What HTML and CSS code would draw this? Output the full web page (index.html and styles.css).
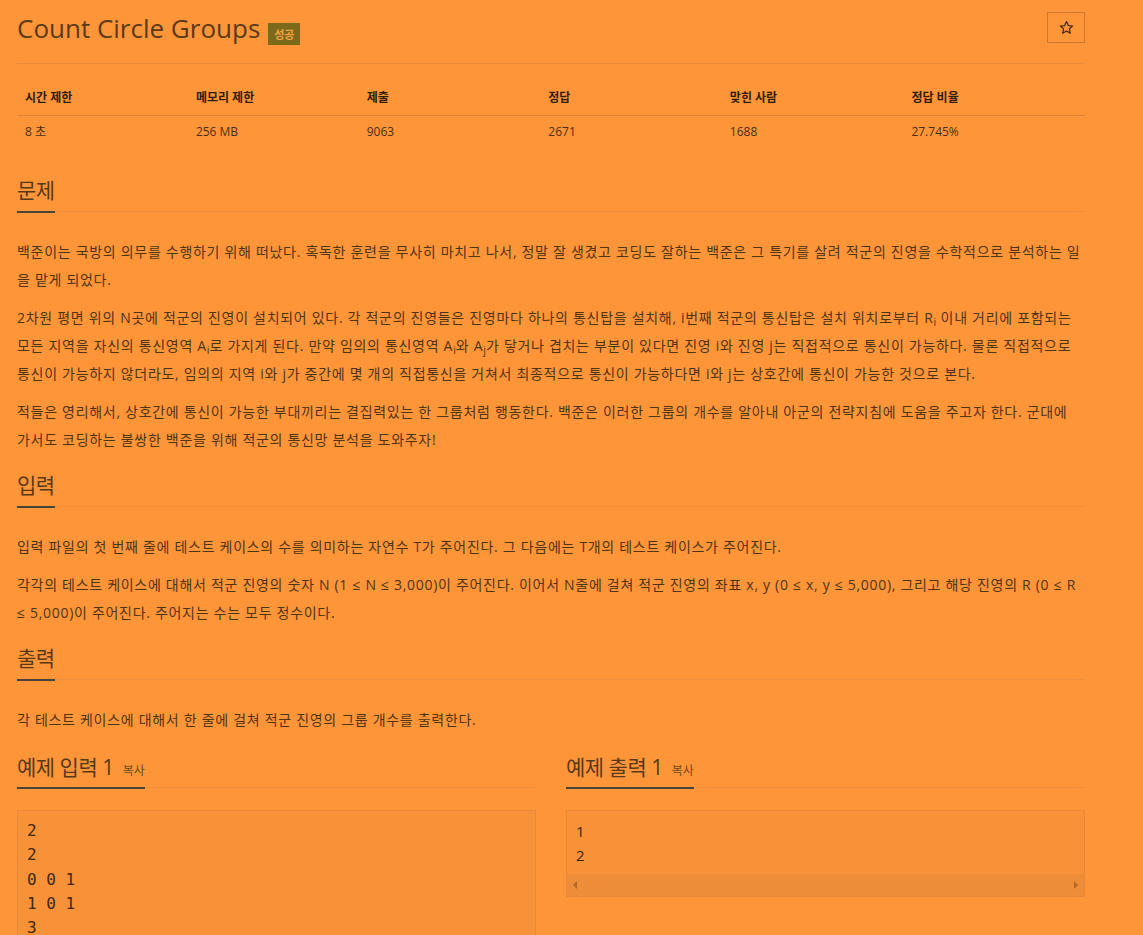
FILE: index.html
```html
<!DOCTYPE html>
<html lang="ko">
<head>
<meta charset="utf-8">
<title>Count Circle Groups</title>
<link rel="stylesheet" href="styles.css">
</head>
<body>
<div class="page">
  <div class="page-header">
    <h1 class="title"><span class="title-text">Count Circle Groups</span><span class="badge">성공</span></h1>
    <button class="star" type="button" aria-label="즐겨찾기">
      <svg width="15" height="15" viewBox="0 0 24 24"><path d="M12 2.5l2.85 6.4 6.95.7-5.2 4.65 1.5 6.85L12 17.55 5.9 21.1l1.5-6.85L2.2 9.6l6.95-.7z" fill="none" stroke="#3a2410" stroke-width="1.9" stroke-linejoin="round"/></svg>
    </button>
  </div>

  <table class="info">
    <thead>
      <tr><th class="c16">시간 제한</th><th class="c16">메모리 제한</th><th class="c17">제출</th><th class="c17">정답</th><th class="c17">맞힌 사람</th><th class="c17">정답 비율</th></tr>
    </thead>
    <tbody>
      <tr><td>8 초</td><td>256 MB</td><td>9063</td><td>2671</td><td>1688</td><td>27.745%</td></tr>
    </tbody>
  </table>

  <section class="sec">
    <div class="headline"><h2>문제</h2></div>
    <div class="text">
      <p>백준이는 국방의 의무를 수행하기 위해 떠났다. 혹독한 훈련을 무사히 마치고 나서, 정말 잘 생겼고 코딩도 잘하는 백준은 그 특기를 살려 적군의 진영을 수학적으로 분석하는 일을 맡게 되었다.</p>
      <p>2차원 평면 위의 N곳에 적군의 진영이 설치되어 있다. 각 적군의 진영들은 진영마다 하나의 통신탑을 설치해, i번째 적군의 통신탑은 설치 위치로부터 R<sub>i</sub> 이내 거리에 포함되는 모든 지역을 자신의 통신영역 A<sub>i</sub>로 가지게 된다. 만약 임의의 통신영역 A<sub>i</sub>와 A<sub>j</sub>가 닿거나 겹치는 부분이 있다면 진영 i와 진영 j는 직접적으로 통신이 가능하다. 물론 직접적으로 통신이 가능하지 않더라도, 임의의 지역 i와 j가 중간에 몇 개의 직접통신을 거쳐서 최종적으로 통신이 가능하다면 i와 j는 상호간에 통신이 가능한 것으로 본다.</p>
      <p>적들은 영리해서, 상호간에 통신이 가능한 부대끼리는 결집력있는 한 그룹처럼 행동한다. 백준은 이러한 그룹의 개수를 알아내 아군의 전략지침에 도움을 주고자 한다. 군대에 가서도 코딩하는 불쌍한 백준을 위해 적군의 통신망 분석을 도와주자!</p>
    </div>
  </section>

  <section class="sec">
    <div class="headline"><h2>입력</h2></div>
    <div class="text">
      <p>입력 파일의 첫 번째 줄에 테스트 케이스의 수를 의미하는 자연수 T가 주어진다. 그 다음에는 T개의 테스트 케이스가 주어진다.</p>
      <p>각각의 테스트 케이스에 대해서 적군 진영의 숫자 N (1 ≤ N ≤ 3,000)이 주어진다. 이어서 N줄에 걸쳐 적군 진영의 좌표 x, y (0 ≤ x, y ≤ 5,000), 그리고 해당 진영의 R (0 ≤ R ≤ 5,000)이 주어진다. 주어지는 수는 모두 정수이다.</p>
    </div>
  </section>

  <section class="sec">
    <div class="headline"><h2>출력</h2></div>
    <div class="text">
      <p>각 테스트 케이스에 대해서 한 줄에 걸쳐 적군 진영의 그룹 개수를 출력한다.</p>
    </div>
  </section>

  <div class="samples">
    <section class="sample">
      <div class="headline sample-head"><h2>예제 입력 1 <span class="copy">복사</span></h2></div>
      <pre class="sampledata">2
2
0 0 1
1 0 1
3
0 0 1
2 0 1
10 0 5</pre>
    </section>
    <section class="sample">
      <div class="headline sample-head"><h2>예제 출력 1 <span class="copy">복사</span></h2></div>
      <div class="outbox">
        <pre class="outdata">1
2</pre>
        <div class="hscroll">
          <span class="arrow arrow-left"></span>
          <span class="arrow arrow-right"></span>
        </div>
      </div>
    </section>
  </div>
</div>
</body>
</html>
```

FILE: styles.css
```css
html, body {
  margin: 0;
  padding: 0;
}

body {
  background: #ff9539;
  font-family: "Open Sans", "Noto Sans CJK KR", sans-serif;
  color: #4f3416;
}

.page {
  width: 1068px;
  margin-left: 17px;
  padding-bottom: 40px;
}

/* header */
.page-header {
  display: flex;
  justify-content: space-between;
  align-items: flex-start;
  padding-top: 12px;
  height: 51px;
  box-sizing: content-box;
  border-bottom: 1px solid #e98b3b;
}

.title {
  margin: 0;
  display: flex;
  align-items: flex-end;
  font-size: 26px;
  line-height: 32px;
  font-weight: 400;
  color: #5a3a17;
}

.badge {
  display: inline-block;
  margin-left: 8px;
  margin-bottom: -1px;
  width: 32px;
  height: 22px;
  line-height: 22px;
  text-align: center;
  background: #7b6a1c;
  color: #f6a23f;
  font-size: 11px;
  font-weight: 700;
  font-family: "Noto Sans CJK KR", sans-serif;
}

.star {
  width: 38px;
  height: 31px;
  margin: 0;
  padding: 0;
  border: 1px solid #c97832;
  background: transparent;
  display: flex;
  align-items: center;
  justify-content: center;
}

.star svg {
  display: block;
}

/* info table */
.info {
  width: 100%;
  border-collapse: collapse;
  margin-top: 17px;
  margin-bottom: 27px;
  font-size: 12px;
}

.info .c16 { width: 16%; }
.info .c17 { width: 17%; }

.info th {
  text-align: left;
  font-weight: 700;
  color: #2f1d0b;
  padding: 8px 8px;
  line-height: 18px;
  border-bottom: 1px solid #d98537;
}

.info td {
  padding: 7px 8px 8px;
  line-height: 18px;
  color: #4a2f13;
}

/* sections */
.headline {
  margin-top: 17px;
  margin-bottom: 26px;
  border-bottom: 1px dotted #df8a3d;
}

.headline h2 {
  display: inline-block;
  margin: 0 0 -2px;
  padding-bottom: 7px;
  font-size: 21px;
  line-height: 28px;
  font-weight: 400;
  letter-spacing: -0.5px;
  color: #583917;
  border-bottom: 2px solid #47443a;
}

.text p {
  margin: 0 0 10px;
  font-size: 14px;
  line-height: 28px;
  letter-spacing: 0.7px;
}

.text sub {
  font-size: 75%;
  line-height: 0;
  vertical-align: -0.3em;
  letter-spacing: 0;
}

/* samples */
.samples {
  display: grid;
  grid-template-columns: 1fr 1fr;
  column-gap: 30px;
}

.sample-head {
  margin-top: 9px;
  margin-bottom: 22px;
}

.sample-head h2 {
  padding-bottom: 6px;
}

.copy {
  font-size: 12px;
  line-height: 1;
  letter-spacing: 0;
  margin-left: 4px;
  color: #6e4a1e;
}

.sampledata {
  margin: 0;
  padding: 8px 9px 7px;
  border: 1px solid #e9883a;
  background: #f79239;
  font-family: "DejaVu Sans Mono", monospace;
  font-size: 16px;
  line-height: 24.3px;
  color: #3e2710;
}

.outbox {
  border: 1px solid #e9883a;
  background: #f79239;
}

.outdata {
  margin: 0;
  padding: 8px 9px 7px;
  font-family: "Open Sans", sans-serif;
  font-size: 15px;
  line-height: 24px;
  color: #3e2710;
}

.hscroll {
  height: 22px;
  background: #ee8d38;
  display: flex;
  justify-content: space-between;
  align-items: center;
  padding: 0 6px;
}

.arrow {
  width: 0;
  height: 0;
  border-top: 4px solid transparent;
  border-bottom: 4px solid transparent;
}

.arrow-left {
  border-right: 4px solid #b3692c;
}

.arrow-right {
  border-left: 4px solid #b3692c;
}
```
